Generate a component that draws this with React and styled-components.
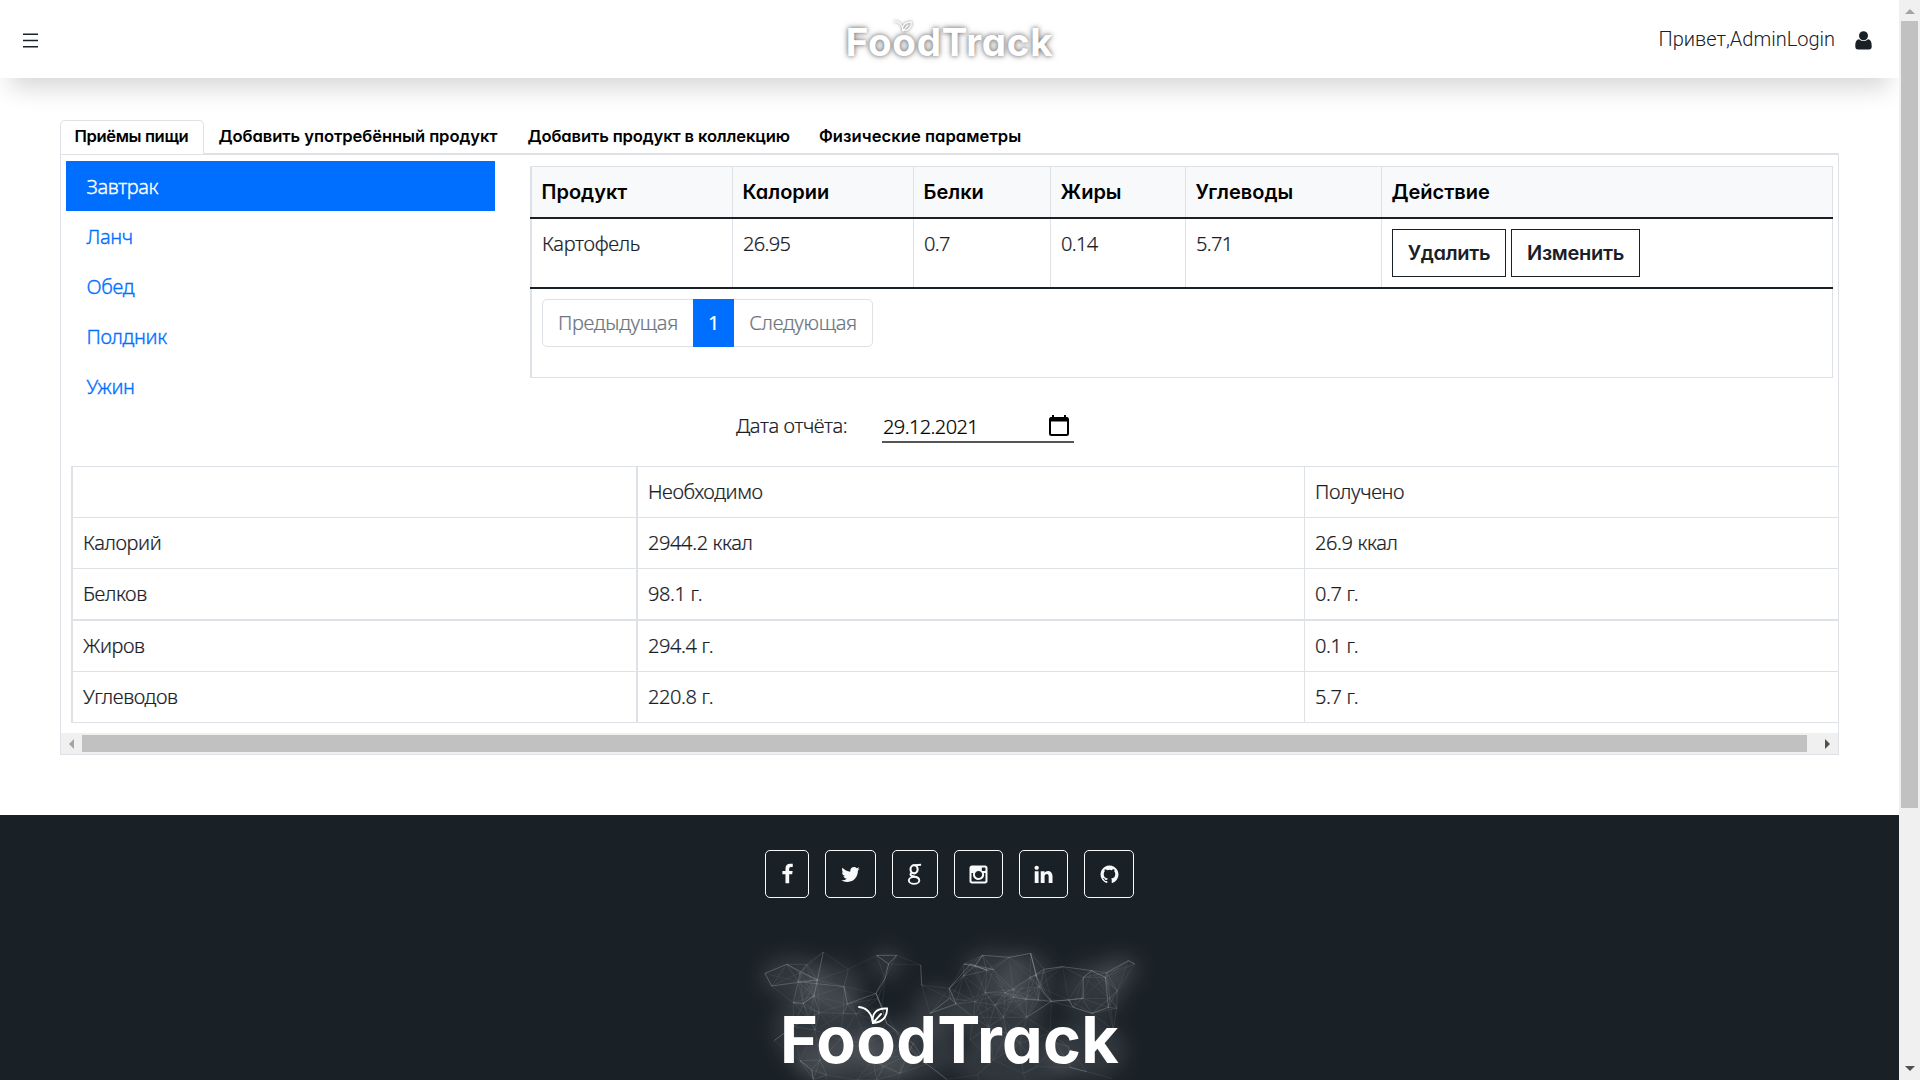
import React from "react";
import styled, { createGlobalStyle, css } from "styled-components";

const ink = "#192026";
const line = "#dee2e6";
const blue = "#006fff";
const textFont = `"Noto Sans", "Open Sans", sans-serif`;
const headFont = `Inter, "Open Sans", sans-serif`;

const GlobalStyle = createGlobalStyle`
  *, *::before, *::after { box-sizing: border-box; }
  body {
    margin: 0;
    background: #fff;
    color: ${ink};
    font: 300 20px/30px ${textFont};
    letter-spacing: -0.3px;
    overflow: hidden;
  }
`;

const Window = styled.div`
  display: flex;
  width: 1920px;
  height: 1080px;
  overflow: hidden;
`;
const Page = styled.div`
  display: flex;
  flex-direction: column;
  width: 1899px;
  overflow: hidden;
`;

/* header */
const Header = styled.header`
  display: grid;
  grid-template-columns: 1fr auto 1fr;
  align-items: center;
  flex: none;
  height: 78px;
  padding: 0 27px 0 23px;
  background: #fff;
  box-shadow: 0 20px 24px -10px rgba(0, 0, 0, 0.16);
`;
const MenuIcon = styled.svg`
  display: block;
  width: 15px;
  height: 15px;
  margin-top: 2px;
`;
const Account = styled.div`
  display: flex;
  justify-content: flex-end;
  align-items: center;
  gap: 20px;
  font-family: Roboto, sans-serif;
  letter-spacing: 0;
`;
const UserIcon = styled.svg`
  display: block;
  width: 17px;
  height: 19px;
  margin-top: 2px;
`;
const Logo = styled.div`
  position: relative;
  font-family: ${headFont};
  font-feature-settings: "cv11" 1;
  font-weight: 700;
  white-space: nowrap;
  color: #fff;
  ${(p) =>
    p.$large
      ? css`
          font-size: 64.6px;
          line-height: 80px;
          letter-spacing: 0.3px;
        `
      : css`
          font-size: 38.6px;
          line-height: 50px;
          letter-spacing: 0.75px;
          margin: 6px 0 0 4px;
          text-shadow: 0 0 4px rgba(0, 0, 0, 0.42), 0 0 7px rgba(0, 0, 0, 0.34);
        `}
`;
const Sprig = styled.svg`
  position: absolute;
  overflow: visible;
  ${(p) =>
    p.$large
      ? css`
          left: 78px;
          top: 5px;
          width: 30px;
          height: 20px;
        `
      : css`
          left: 48px;
          top: 3px;
          width: 18px;
          height: 12px;
          filter: drop-shadow(0 0 1.5px rgba(0, 0, 0, 0.6));
        `}
`;

/* tabs */
const Main = styled.main`
  display: flex;
  flex-direction: column;
  flex: none;
  width: 1779px;
  height: 737px;
  margin-left: 60px;
  padding-top: 42px;
`;
const Tabs = styled.nav`
  display: flex;
  flex: none;
  height: 35px;
  border-bottom: 2px solid ${line};
`;
const Tab = styled.a`
  width: ${(p) => p.$w}px;
  height: 34px;
  padding-left: 13.5px;
  border: 1px solid transparent;
  border-bottom: 0;
  border-radius: 5px 5px 0 0;
  font: 600 16.6px/30px ${headFont};
  font-feature-settings: "cv11" 1;
  letter-spacing: ${(p) => p.$spacing}px;
  color: #000;
  white-space: nowrap;
  ${(p) =>
    p.$active &&
    css`
      background: #fff;
      border-color: ${line};
    `}
`;
const Panel = styled.section`
  display: flex;
  flex-direction: column;
  flex: none;
  height: 600px;
  border: 1px solid ${line};
  border-top: 0;
  -webkit-text-stroke-width: 0.2px;
`;
const Upper = styled.div`
  display: flex;
  align-items: flex-start;
  padding: 6px 0 0 5px;
`;
const Meals = styled.ul`
  flex: none;
  width: 429px;
  margin: 0;
  padding: 0;
  list-style: none;
`;
const Meal = styled.li`
  height: 50px;
  padding: 11px 20px 9px 20.5px;
  letter-spacing: -0.35px;
  -webkit-text-stroke-width: 0.35px;
  color: ${(p) => (p.$active ? "#fff" : blue)};
  background: ${(p) => (p.$active ? blue : "transparent")};
`;

/* products table */
const Products = styled.div`
  flex: none;
  width: 1303px;
  height: 212px;
  margin: 5px 0 0 35px;
  border: 1px solid ${line};
  border-left-width: 2px;
`;
const ProductRow = styled.div`
  display: grid;
  grid-template-columns: 201px 181px 137px 135px 196px 451px;
  height: ${(p) => (p.$head ? 52 : 70)}px;
  margin: 0 -1px 0 -2px;
  padding-left: 2px;
  border-bottom: 2px solid ${ink};
  background: linear-gradient(90deg, ${line} 2px, ${(p) => (p.$head ? "#f8f9fb" : "#fff")} 2px);
`;
const Cell = styled.div`
  display: flex;
  align-items: flex-start;
  gap: 5px;
  padding: 10px;
  border-right: 1px solid ${line};
  ${(p) => p.$num && "letter-spacing: -0.65px;"}
  ${(p) =>
    p.$head &&
    css`
      padding-left: 9.5px;
      font-family: ${headFont};
      font-feature-settings: "cv11" 1;
      font-weight: 600;
      letter-spacing: 0;
      -webkit-text-stroke-width: 0;
      color: #000;
    `}
`;
const Action = styled.button`
  width: ${(p) => p.$w}px;
  height: 48px;
  padding: 0;
  border: 1px solid ${ink};
  background: #fff;
  font: 600 20px/44px ${headFont};
  font-feature-settings: "cv11" 1;
  letter-spacing: -0.3px;
  -webkit-text-stroke-width: 0;
  color: ${ink};
`;
const Pager = styled.div`
  display: flex;
  width: 331px;
  height: 48px;
  margin: 10px;
  border: 1px solid ${line};
  border-radius: 5px;
  color: #6c757d;
`;
const PageLink = styled.a`
  flex: none;
  width: ${(p) => p.$w}px;
  height: 46px;
  line-height: 45px;
  text-align: center;
  ${(p) =>
    p.$active &&
    css`
      height: 48px;
      margin-top: -1px;
      line-height: 47px;
      background: ${blue};
      color: #fff;
      font-weight: 400;
    `}
`;

/* report */
const DateRow = styled.div`
  display: flex;
  align-items: flex-start;
  flex: none;
  height: 55px;
  padding-left: 675px;
`;
const DateLabel = styled.label`
  width: 146px;
  letter-spacing: -0.4px;
`;
const DateField = styled.div`
  display: flex;
  justify-content: space-between;
  width: 192px;
  height: 32px;
  padding: 0 5px 0 1px;
  border-bottom: 2px solid #555;
  line-height: 32px;
  letter-spacing: -0.6px;
  color: #000;
`;
const CalendarIcon = styled.svg`
  width: 20px;
  height: 21px;
  margin-top: 4px;
`;
const Report = styled.div`
  flex: none;
  margin-left: 10px;
  border: 1px solid ${line};
  border-width: 1px 0 0 2px;
`;
const ReportRow = styled.div`
  display: grid;
  grid-template-columns: 565px 667px 1fr;
  height: ${(p) => (p.$thick ? 52 : 51)}px;
  border-bottom: ${(p) => (p.$thick ? 2 : 1)}px solid ${line};
  & > div {
    padding: 10px 0 0 10px;
    letter-spacing: -0.38px;
  }
  & > div:nth-child(1) {
    border-right: 2px solid ${line};
  }
  & > div:nth-child(2) {
    border-right: 1px solid ${line};
  }
`;
const HScroll = styled.div`
  display: flex;
  align-items: center;
  justify-content: space-between;
  flex: none;
  height: 21px;
  margin-top: 10px;
  padding: 0 8px;
  background: #f0f0f0;
`;
const HThumb = styled.div`
  width: 1725px;
  height: 17px;
  margin-right: 10px;
  background: #c1c1c1;
`;
const VScroll = styled.div`
  display: flex;
  flex-direction: column;
  align-items: center;
  width: 21px;
  height: 1080px;
  padding: 9px 0;
  background: #f0f0f0;
`;
const VThumb = styled.div`
  width: 17px;
  height: 787px;
  margin: 7px 0 auto;
  background: #c1c1c1;
`;
const Arrow = styled.i`
  flex: none;
  width: 0;
  height: 0;
  border: 5px solid transparent;
  ${(p) => p.$dir === "left" && "border-width: 5px 5px 5px 0; border-right-color: #a3a3a3;"}
  ${(p) => p.$dir === "right" && "border-width: 5px 0 5px 5px; border-left-color: #505050;"}
  ${(p) => p.$dir === "up" && "border-width: 0 5px 5px; border-bottom-color: #a3a3a3;"}
  ${(p) => p.$dir === "down" && "border-width: 5px 5px 0; border-top-color: #505050;"}
`;

/* footer */
const Footer = styled.footer`
  display: flex;
  flex-direction: column;
  align-items: center;
  flex: none;
  height: 400px;
  padding-top: 35px;
  background: ${ink};
`;
const Socials = styled.div`
  display: flex;
  gap: 16px;
  height: 48px;
`;
const Social = styled.a`
  display: flex;
  align-items: center;
  justify-content: center;
  width: ${(p) => p.$w}px;
  height: 48px;
  border: 1px solid #f8f9fa;
  border-radius: 5px;
  color: #f8f9fa;
`;
const Glyph = styled.svg`
  display: block;
  width: 21px;
  height: 21px;
  overflow: visible;
  fill: ${(p) => (p.$outline ? "none" : "currentColor")};
  stroke: ${(p) => (p.$outline ? "currentColor" : "none")};
`;
const Brand = styled.div`
  display: flex;
  justify-content: center;
  position: relative;
  width: 420px;
  height: 190px;
  margin-top: 32px;
  padding-top: 70px;
`;
const Mesh = styled.svg`
  position: absolute;
  left: 0;
  top: 0;
  width: 420px;
  height: 190px;
`;

const socials = [
  { name: "facebook", w: 44, d: "M1343 -20v284h-157q-86 0-116 36t-30 108v179h293l-39 296h-254v769h-316v-769h-265v-296h265v-208q0-186 104-298.500t277-112.500q147 0 238 12z" },
  { name: "twitter", w: 50.5, d: "M1684 408q-67 98-162 167 1 14 1 42 0 130-38 259.5t-115.5 248.5-184.5 210.5-258 146-323 54.5q-271 0-496-145 35 4 78 4 225 0 401-138-105-2-188-64.5t-114-159.5q33 5 61 5 43 0 85-11-112-23-185.5-111.5t-73.5-205.5v-4q68 38 146 41-66-44-105-115t-39-154q0-88 44-163 121 149 294.5 238.5t371.5 99.5q-8-38-8-74 0-134 94.5-228.5t228.5-94.5q140 0 236 102 109-21 205-78-37 115-142 178 93-10 186-50z" },
  { name: "google", w: 46.5 },
  { name: "instagram", w: 49, d: "M1490 1426v-648h-135q20 63 20 131 0 126-64 232.5t-174 168.5-240 62q-197 0-337-135.5t-140-327.5q0-68 20-131h-141v648q0 26 17.5 43.5t43.5 17.5h1069q25 0 43-17.5t18-43.5zm-284-533q0-124-90.5-211.5t-218.5-87.5q-127 0-217.5 87.5t-90.5 211.5 90.5 211.5 217.5 87.5q128 0 218.5-87.5t90.5-211.5zm284-360v-165q0-28-20-48.5t-49-20.5h-174q-29 0-49 20.5t-20 48.5v165q0 29 20 49t49 20h174q29 0 49-20t20-49zm174-208v1142q0 81-58 139t-139 58h-1142q-81 0-139-58t-58-139v-1142q0-81 58-139t139-58h1142q81 0 139 58t58 139z" },
  { name: "linkedin", w: 49, d: "M477 625v991h-330v-991h330zm21-306q1 73-50.5 122t-135.5 49h-2q-82 0-132-49t-50-122q0-74 51.5-122.5t134.5-48.5 133 48.5 51 122.5zm1166 729v568h-329v-530q0-105-40.5-164.5t-126.5-59.5q-63 0-105.5 34.5t-63.5 85.5q-11 30-11 81v553h-329q2-399 2-647t-1-296l-1-48h329v144h-2q20-32 41-56t56.5-52 87-43.5 114.5-15.5q171 0 275 113.5t104 332.5z" },
  { name: "github", w: 50, d: "M896 128q209 0 385.5 103t279.5 279.5 103 385.5q0 251-146.5 451.5t-378.5 277.5q-27 5-40-7t-13-30q0-3 .5-76.5t.5-134.5q0-97-52-142 57-6 102.5-18t94-39 81-66.5 53-105 20.5-150.5q0-119-79-206 37-91-8-204-28-9-81 11t-92 44l-38 24q-93-26-192-26t-192 26q-16-11-42.5-27t-83.5-38.5-85-13.5q-45 113-8 204-79 87-79 206 0 85 20.5 150t52.5 105 80.5 67 94 39 102.5 18q-39 36-49 103-21 10-45 15t-57 5-65.5-21.5-55.5-62.5q-19-32-48.5-52t-49.5-24l-20-3q-21 0-29 4.5t-5 11.5 9 14 13 12l7 5q22 10 43.5 38t31.5 51l10 23q13 38 44 61.5t67 30 69.5 7 55.5-3.5l23-4q0 38 .5 88.5t.5 54.5q0 18-13 30t-40 7q-232-77-378.5-277.5t-146.5-451.5q0-209 103-385.5t279.5-279.5 385.5-103z" },
];

function SocialIcon({ d }) {
  if (d) {
    return (
      <Glyph viewBox="0 0 1792 1792">
        <path d={d} />
      </Glyph>
    );
  }
  return (
    <Glyph $outline viewBox="0 0 20 20">
      <ellipse cx="9.6" cy="5" rx="3.400" ry="3.900" strokeWidth="2" />
      <ellipse cx="9.6" cy="15.600" rx="5" ry="3.300" strokeWidth="1.800" />
      <path d="M10.500 1.100C12.500 .8 14 .8 16.300 .8M7 8.200C5.200 10.200 6.500 11.300 9 11.700c3 .5 5 1.300 5.400 3.400" strokeWidth="1.900" />
    </Glyph>
  );
}

/* constellation behind the footer logo, in thirds of a pixel */
const nodes = [
  [75, 130], [95, 168], [140, 103], [180, 128], [175, 155], [200, 103], [250, 66], [232, 150], [325, 118], [312, 170], [222, 198],
  [160, 218], [190, 220], [322, 222], [238, 248], [205, 265], [160, 290], [225, 300], [102, 332], [348, 252], [408, 190], [435, 145],
  [410, 76], [470, 76], [446, 102], [426, 232], [414, 206], [466, 300], [440, 280], [545, 165], [542, 105], [628, 175], [630, 205],
  [648, 222], [570, 250], [670, 138], [672, 102], [692, 102], [728, 76], [705, 108], [740, 120], [808, 82], [872, 70], [760, 118],
  [888, 135], [870, 142], [820, 178], [820, 202], [858, 208], [898, 170], [912, 118], [895, 210], [934, 214], [860, 262], [736, 188],
  [795, 188], [705, 215], [765, 225], [700, 262], [745, 290], [790, 262], [968, 110], [1055, 122], [1030, 142], [1096, 142], [986, 210],
  [1026, 205], [1000, 232], [1056, 250], [1105, 232], [1132, 182], [1100, 128], [1165, 92], [1184, 102], [1130, 235], [1110, 205],
  [950, 340], [985, 350], [930, 310], [1120, 300], [1115, 445], [1040, 425], [990, 412], [520, 340], [545, 380], [490, 330], [500, 375],
  [430, 410], [480, 430], [410, 450], [560, 402], [620, 448], [690, 330], [760, 390], [712, 435], [840, 340], [800, 310], [850, 430],
  [890, 410], [180, 392], [215, 420], [240, 390], [220, 448], [300, 330], [310, 250], [380, 340], [400, 390], [350, 450], [260, 435],
  [450, 520], [600, 530], [740, 510], [880, 520], [1000, 530], [250, 530],
];
const edges = [];
nodes.forEach((a, i) =>
  nodes.slice(i + 1).forEach((b) => {
    const d = Math.hypot(a[0] - b[0], a[1] - b[1]);
    if (d < 104) edges.push([a, b, 0.22 - d * 0.0014]);
  })
);
const traces = [
  "M75 130L95 168L232 150L140 103L75 130M175 155L312 170L322 222L408 190L435 145L446 102L470 76L410 76L446 102",
  "M408 190L426 232L440 280L466 300M542 105L545 165L550 170M570 250L648 222L628 175L690 102M628 205L570 250",
  "M728 76L808 82L872 70L888 135L912 190L934 214L860 262M728 76L705 108L740 120M872 70L890 140",
  "M912 118L968 110L1055 122L1096 142L1105 232L1056 250L1000 232L986 210L1030 205L1030 142L1055 122M1100 128L1165 92L1184 102",
  "M934 214L986 210M160 218L190 220L222 198L250 66M102 332L160 290M180 392L215 420L220 448M480 330L560 402L620 448M990 412L1040 425",
];
const glows = [
  [160, 140, 100, 65], [280, 170, 90, 75], [250, 300, 150, 130], [440, 100, 50, 45], [500, 360, 150, 95], [600, 240, 80, 75],
  [760, 120, 95, 65], [860, 150, 80, 90], [780, 260, 130, 100], [1060, 180, 95, 85], [1140, 120, 60, 50], [1040, 360, 120, 90],
  [820, 400, 180, 80], [340, 400, 180, 80],
];

function LogoMark({ large }) {
  return (
    <Logo $large={large}>
      FoodTrack
      <Sprig $large={large} viewBox="0 0 30 20" fill="none" stroke="#fff" strokeWidth="1.9" strokeLinecap="round">
        <path d="M1 2C8 2.500 14 8 15 18" />
        <path d="M15 18C13 8.500 19 2.800 29 3.500C29.500 12 24 17.500 15 18ZM15 18L23 9" />
      </Sprig>
    </Logo>
  );
}

const tabs = [
  ["Приёмы пищи", 144, -0.38],
  ["Добавить употребённый продукт", 309, -0.08],
  ["Добавить продукт в коллекцию", 291.5, -0.14],
  ["Физические параметры", 230, 0.04],
];
const meals = ["Завтрак", "Ланч", "Обед", "Полдник", "Ужин"];
const columns = ["Продукт", "Калории", "Белки", "Жиры", "Углеводы", "Действие"];
const report = [
  ["", "Необходимо", "Получено"],
  ["Калорий", "2944.2 ккал", "26.9 ккал"],
  ["Белков", "98.1 г.", "0.7 г."],
  ["Жиров", "294.4 г.", "0.1 г."],
  ["Углеводов", "220.8 г.", "5.7 г."],
];

export default function App() {
  return (
    <Window>
      <GlobalStyle />
      <Page>
        <Header>
          <MenuIcon viewBox="0 0 15 15" stroke={ink}>
            <path d="M0 1.300h15M0 7.500h15M0 13.700h15" strokeWidth="1.500" />
          </MenuIcon>
          <LogoMark />
          <Account>
            Привет,AdminLogin
            <UserIcon viewBox="0 0 17 19" fill={ink}>
              <circle cx="8.500" cy="4.700" r="4.500" />
              <path d="M4 8.200Q8.500 12 13 8.200C16 8.600 16.700 11.500 16.700 15.500Q16.700 18.500 14 18.500H3Q.300 18.500 .300 15.500C.300 11.500 1 8.600 4 8.200Z" />
            </UserIcon>
          </Account>
        </Header>
        <Main>
          <Tabs>
            {tabs.map(([t, w, spacing], i) => (
              <Tab key={t} $w={w} $spacing={spacing} $active={i === 0}>
                {t}
              </Tab>
            ))}
          </Tabs>
          <Panel>
            <Upper>
              <Meals>
                {meals.map((m, i) => (
                  <Meal key={m} $active={i === 0}>
                    {m}
                  </Meal>
                ))}
              </Meals>
              <Products>
                <ProductRow $head>
                  {columns.map((c) => (
                    <Cell key={c} $head>
                      {c}
                    </Cell>
                  ))}
                </ProductRow>
                <ProductRow>
                  <Cell>Картофель</Cell>
                  <Cell $num>26.95</Cell>
                  <Cell $num>0.7</Cell>
                  <Cell $num>0.14</Cell>
                  <Cell $num>5.71</Cell>
                  <Cell>
                    <Action $w={114}>Удалить</Action>
                    <Action $w={129}>Изменить</Action>
                  </Cell>
                </ProductRow>
                <Pager>
                  <PageLink $w={150}>Предыдущая</PageLink>
                  <PageLink $w={41} $active>
                    1
                  </PageLink>
                  <PageLink $w={138}>Следующая</PageLink>
                </Pager>
              </Products>
            </Upper>
            <DateRow>
              <DateLabel>Дата отчёта:</DateLabel>
              <DateField>
                29.12.2021
                <CalendarIcon viewBox="0 0 20 21">
                  <path d="M4 0v3M16 0v3" stroke="#000" strokeWidth="2" />
                  <rect x="1" y="3" width="18" height="17" rx="1.500" fill="none" stroke="#000" strokeWidth="2" />
                  <path d="M1 2.500h18v4H1z" />
                </CalendarIcon>
              </DateField>
            </DateRow>
            <Report>
              {report.map((r, i) => (
                <ReportRow key={i} $thick={i === 2}>
                  {r.map((c, j) => (
                    <div key={j}>{c}</div>
                  ))}
                </ReportRow>
              ))}
            </Report>
            <HScroll>
              <Arrow $dir="left" />
              <HThumb />
              <Arrow $dir="right" />
            </HScroll>
          </Panel>
        </Main>
        <Footer>
          <Socials>
            {socials.map((s) => (
              <Social key={s.name} $w={s.w} aria-label={s.name}>
                <SocialIcon d={s.d} />
              </Social>
            ))}
          </Socials>
          <Brand>
            <Mesh viewBox="0 0 1260 570">
              <filter id="soft" x="-30%" y="-30%" width="160%" height="160%">
                <feGaussianBlur stdDeviation="26" />
              </filter>
              <g filter="url(#soft)" fill="#fff" fillOpacity="0.1">
                {glows.map(([x, y, rx, ry], i) => (
                  <ellipse key={i} cx={x} cy={y} rx={rx} ry={ry} />
                ))}
              </g>
              <g stroke="#fff" strokeWidth="2">
                {edges.map(([a, b, o], i) => (
                  <line key={i} x1={a[0]} y1={a[1]} x2={b[0]} y2={b[1]} strokeOpacity={o} />
                ))}
              </g>
              <g stroke="#fff" strokeOpacity="0.18" strokeWidth="2.500" fill="none">
                {traces.map((d) => (
                  <path key={d} d={d} />
                ))}
              </g>
            </Mesh>
            <LogoMark large />
          </Brand>
        </Footer>
      </Page>
      <VScroll>
        <Arrow $dir="up" />
        <VThumb />
        <Arrow $dir="down" />
      </VScroll>
    </Window>
  );
}
